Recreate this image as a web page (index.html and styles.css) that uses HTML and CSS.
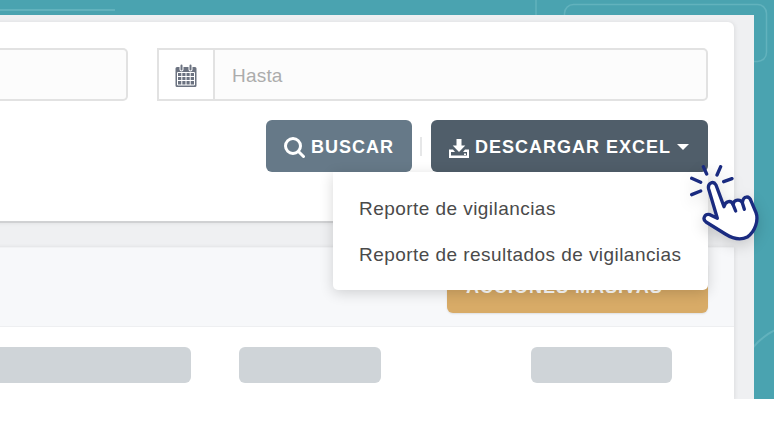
FILE: index.html
```html
<!DOCTYPE html>
<html lang="es">
<head>
<meta charset="utf-8">
<title>Vigilancias</title>
<link rel="stylesheet" href="styles.css">
</head>
<body>
<div class="stage">
  <svg class="deco" width="774" height="399" viewBox="0 0 774 399" fill="none" stroke="#62b2bd" stroke-width="1.500">
    <path d="M0 10H115" stroke-width="2"/>
    <path d="M536 0V15"/>
    <rect x="564.500" y="4.500" width="202" height="57" rx="9"/>
    <circle cx="800" cy="385" r="60" stroke-width="2"/>
  </svg>
  <main class="panel">
    <section class="card">
      <div class="filters">
        <div class="field field-from"></div>
        <div class="date-group">
          <span class="addon">
            <svg class="cal" width="22" height="24" viewBox="0 0 22 24" aria-hidden="true">
              <path fill="#6b7280" d="M2 3h2.500v2.500a2 2 0 0 0 4 0V3h5v2.500a2 2 0 0 0 4 0V3H20a1.500 1.500 0 0 1 1.500 1.500v17A1.500 1.500 0 0 1 20 23H2a1.500 1.500 0 0 1-1.500-1.500v-17A1.500 1.500 0 0 1 2 3z"/>
              <path fill="#6b7280" d="M5.500 1.500a1 1 0 0 1 2 0v4a1 1 0 0 1-2 0zM14.500 1.500a1 1 0 0 1 2 0v4a1 1 0 0 1-2 0z"/>
              <path stroke="#fff" stroke-width="1" fill="none" d="M2.500 8.500h17v12.500h-17zM2.500 12.500h17M2.500 16.500h17M6.800 8.500V21M11 8.500V21M15.200 8.500V21"/>
            </svg>
          </span>
          <span class="date-input">Hasta</span>
        </div>
      </div>
      <div class="actions">
        <button class="btn btn-search" type="button">
          <svg width="22" height="22" viewBox="0 0 22 22" fill="none" stroke="#fff" stroke-width="3" stroke-linecap="round" aria-hidden="true"><circle cx="10" cy="10" r="7.500"/><path d="M15.500 15.500L20.500 20.500"/></svg>
          BUSCAR
        </button>
        <span class="divider"></span>
        <div class="menu-wrap">
          <button class="btn btn-excel" type="button">
            <svg class="dl" width="22" height="19" viewBox="0 0 22 19" fill="#fff" aria-hidden="true"><path d="M8.500 0h5v6.500h3.800L11 13 4.700 6.500h3.800z"/><path d="M1 10.500h4l2 2.400H3v3.600h16v-3.600h-4l2-2.400h4V19H1z"/><path d="M16 14.500h2v1.500h-2z"/></svg>
            DESCARGAR EXCEL
            <span class="caret"></span>
          </button>
          <ul class="menu">
            <li>Reporte de vigilancias</li>
            <li>Reporte de resultados de vigilancias</li>
          </ul>
        </div>
      </div>
    </section>
    <section class="table-card">
      <div class="table-head">
        <button class="btn btn-bulk" type="button">ACCIONES MASIVAS <span class="caret caret-bulk"></span></button>
      </div>
      <div class="table-row">
        <span class="skeleton sk-a"></span>
        <span class="skeleton sk-b"></span>
        <span class="skeleton sk-c"></span>
      </div>
    </section>
  </main>
  <svg class="hand" width="114" height="100" viewBox="0 0 342 300" aria-hidden="true">
    <g fill="none" stroke="#1a2b80" stroke-width="10" stroke-linecap="round" stroke-linejoin="round">
      <path d="M130 50L140 72M182 50L171 75M95 85L122 97M95 134L122 123M191 95L216 86"/>
      <path fill="#fff" d="M146 117C142 101 159 90 168 105L192 170C196 152 214 150 219 163C222 147 242 147 247 158C250 136 268 136 274 155L288 188C296 210 286 245 262 261C240 272 215 264 196 252L138 216C126 207 134 190 150 194L172 205z"/>
      <path d="M219 163L227 183M247 158L253 178"/>
    </g>
  </svg>
</div>
</body>
</html>
```

FILE: styles.css
```css
* { box-sizing: border-box; }
html, body { margin: 0; background: #fff; }
body { width: 774px; height: 428px; overflow: hidden; font-family: "Liberation Sans", Arial, sans-serif; }
.stage { position: relative; height: 399px; background: #4aa3b0; overflow: hidden; }
.deco { position: absolute; left: 0; top: 0; }
.panel { position: relative; height: 384px; margin: 15px 20px 0 -20px; padding-top: 7px; background: #eff0f2; }
.card { height: 201px; margin-right: 20px; padding: 26px 26px 0 0; background: #fff; border-radius: 0 6px 0 0; border-bottom: 2px solid #d0d1d3; box-shadow: 1px 0 4px rgba(0,0,0,.08); }
.filters { display: flex; gap: 29px; }
.field { width: 148px; height: 53px; background: #fcfcfc; border: 2px solid #e2e2e2; border-radius: 0 5px 5px 0; border-left: 0; }
.date-group { display: flex; flex: 1; height: 53px; background: #fcfcfc; border: 2px solid #e2e2e2; border-radius: 0 5px 5px 0; }
.addon { display: flex; align-items: center; justify-content: center; width: 56px; padding-top: 2px; padding-right: 1px; background: #fff; border-right: 2px solid #e2e2e2; }
.date-input { padding-left: 17px; line-height: 51px; font-size: 19px; letter-spacing: .2px; color: #acacac; }
.actions { display: flex; justify-content: flex-end; align-items: center; margin-top: 19px; }
.btn { display: flex; align-items: center; height: 52px; border: 0; border-radius: 6px; color: #fff; font: bold 18px "Liberation Sans", Arial, sans-serif; letter-spacing: 1px; white-space: nowrap; }
.btn-search { width: 146px; padding: 2px 0 0 17px; gap: 6px; background: #667988; }
.divider { width: 2px; height: 19px; margin: 0 9px 0 8px; background: #e6e7e8; }
.menu-wrap { position: relative; }
.btn-excel { width: 277px; padding: 2px 0 0 17px; gap: 5px; background: #505e6a; }
.dl { margin-top: 3px; }
.caret { width: 0; height: 0; margin-left: 1px; border: 6.500px solid transparent; border-top: 6px solid #fff; border-bottom: 0; }
.menu { position: absolute; z-index: 2; top: 52px; right: 0; width: 375px; height: 118px; margin: 0; padding: 14px 0 0 26px; list-style: none; background: #fff; border-radius: 0 0 5px 5px; box-shadow: 0 3px 14px rgba(0,0,0,.16); font-size: 19px; letter-spacing: .45px; color: #4a4a4a; }
.menu li { height: 46px; line-height: 46px; white-space: nowrap; }
.table-card { margin: 24px 20px 0 0; background: #fff; height: 153px; box-shadow: 1px 0 4px rgba(0,0,0,.08); }
.table-head { display: flex; justify-content: flex-end; height: 80px; padding: 13px 26px 0 0; background: #f7f8fa; border-top: 1px solid #f1f2f4; border-bottom: 1px solid #eeeff1; }
.btn-bulk { width: 261px; padding: 0 0 0 19px; background: #d8ab67; box-shadow: 0 1px 2px rgba(0,0,0,.1); }
.caret-bulk { margin-left: 18px; }
.table-row { display: flex; padding-top: 20px; }
.skeleton { height: 36px; background: #cfd4d8; border-radius: 6px; }
.sk-a { width: 211px; margin-right: 48px; border-radius: 0 6px 6px 0; }
.sk-b { width: 142px; margin-right: 150px; }
.sk-c { width: 141px; }
.hand { position: absolute; z-index: 3; left: 660px; top: 150px; filter: drop-shadow(0 5px 7px rgba(0,0,0,.16)); }
```
